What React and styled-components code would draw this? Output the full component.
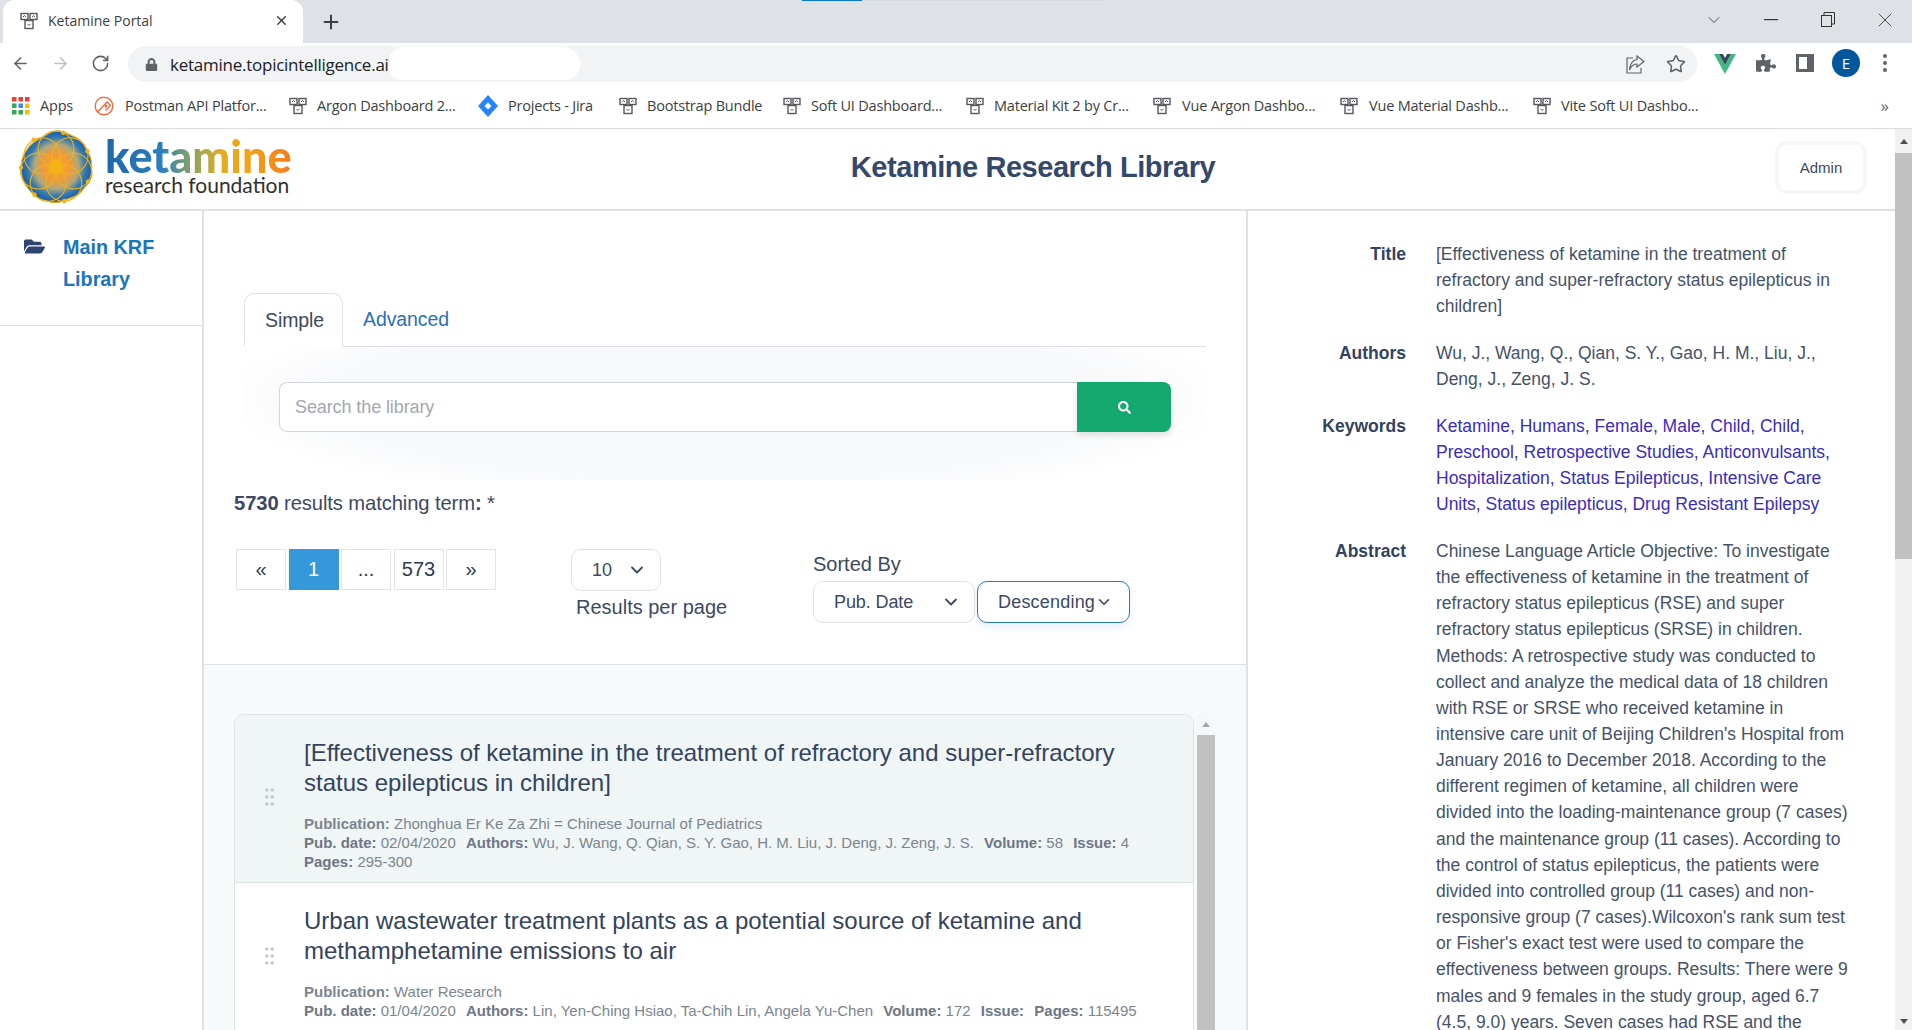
import React from 'react'
import styled, { createGlobalStyle } from 'styled-components'
import { ArrowLeft, ArrowRight, RotateCw, Star, ChevronDown, Plus, X } from 'lucide-react'
import { FaFolderOpen, FaPuzzlePiece, FaLock, FaSearch } from 'react-icons/fa'

const GlobalStyle = createGlobalStyle`
  html, body { margin: 0; padding: 0; height: 100%; overflow: hidden; background: #fff; }
  #root { height: 100%; }
  * { box-sizing: border-box; }
`

const Window = styled.div`
  height: 1030px;
  display: flex;
  flex-direction: column;
  font-family: "Liberation Sans", Arial, sans-serif;
  color: #3b4963;
`

const TabStrip = styled.div`
  position: relative;
  height: 43px;
  flex: none;
  background: #dee1e6;
  display: flex;
  align-items: flex-end;
  padding-left: 3px;
`
const LoadBar = styled.div`
  position: absolute;
  top: 0;
  left: 802px;
  width: 301px;
  height: 1px;
  background: linear-gradient(90deg, #0a78d6 0 60px, #d3d6da 60px);
`
const BrowserTab = styled.div`
  width: 300px;
  height: 43px;
  background: #fff;
  border-radius: 12px 12px 0 0;
  display: flex;
  align-items: center;
  padding: 0 14px 2px 17px;
  gap: 10px;
  font: 14px "Open Sans", sans-serif;
  color: #3c4043;
`
const TabTitle = styled.span`
  flex: 1;
`
const NewTab = styled.div`
  margin-left: 17px;
  height: 43px;
  display: flex;
  align-items: center;
  color: #3c4043;
`
const WindowControls = styled.div`
  margin-left: auto;
  height: 43px;
  display: flex;
  align-items: center;
  padding-bottom: 4px;
  margin-right: -1px;
  color: #3a3a3a;
`
const WinSlot = styled.div`
  width: 57px;
  display: flex;
  justify-content: center;
`

const Toolbar = styled.div`
  height: 43px;
  flex: none;
  display: flex;
  align-items: center;
  padding: 0 0 3px 11px;
  color: #5f6368;
`
const NavIcons = styled.div`
  display: flex;
  gap: 21px;
  width: 117px;
`
const Omnibox = styled.div`
  position: relative;
  width: 1569px;
  height: 36px;
  margin-top: 2px;
  background: #f1f3f4;
  border-radius: 18px;
  display: flex;
  align-items: center;
  padding: 0 11px 0 17px;
`
const Url = styled.span`
  margin-left: 12px;
  font: 17px "Open Sans", sans-serif;
  color: #202124;
  letter-spacing: -0.25px;
`
const Redaction = styled.div`
  position: absolute;
  left: 261px;
  top: 1px;
  width: 191px;
  height: 33px;
  background: #fff;
  border-radius: 16px 20px 18px 14px;
`
const OmniRight = styled.div`
  margin-left: auto;
  display: flex;
  align-items: center;
  gap: 20px;
`
const Extensions = styled.div`
  display: flex;
  align-items: center;
  gap: 20px;
  margin-left: 17px;
`
const Avatar = styled.div`
  width: 28px;
  height: 28px;
  margin: 0 2px 0 -2px;
  border-radius: 50%;
  background: #01579b;
  color: #fff;
  font: 15px "Open Sans", sans-serif;
  display: flex;
  align-items: center;
  justify-content: center;
`

const Bookmarks = styled.div`
  height: 43px;
  flex: none;
  display: flex;
  align-items: center;
  padding: 0 23px 3px 12px;
  border-bottom: 1px solid #dadce0;
  font: 14.5px "Open Sans", sans-serif;
  color: #3c4043;
  white-space: nowrap;
`
const Bookmark = styled.div`
  display: flex;
  align-items: center;
  gap: ${p => p.$gap || 10}px;
  width: ${p => p.$w}px;
  flex: none;
`
const BookmarkLabel = styled.span`
  letter-spacing: -0.2px;
`
const MoreMarks = styled.span`
  margin-left: auto;
  font-size: 17px;
  color: #5f6368;
`

const Header = styled.header`
  height: 82px;
  flex: none;
  border-bottom: 2px solid #dee2e6;
  display: flex;
  align-items: center;
  padding: 0 28px 4px 19px;
`
const Logo = styled.div`
  display: flex;
  align-items: center;
  gap: 12px;
  width: 290px;
`
const Wordmark = styled.div`
  display: flex;
  flex-direction: column;
  margin-top: -2px;
  font-family: Lato, sans-serif;
`
const WordTop = styled.span`
  font-size: 45px;
  font-weight: 900;
  line-height: 38px;
  background: linear-gradient(90deg, #1f66ad 0%, #2b7fbe 30%, #7fa26a 45%, #e3ad1f 62%, #f2a315 78%, #f47b20 100%);
  -webkit-background-clip: text;
  background-clip: text;
  color: transparent;
`
const WordBottom = styled.span`
  font-size: 21px;
  line-height: 20px;
  color: #2f2f2f;
`
const PageTitle = styled.h1`
  flex: 1;
  margin: 0;
  padding-right: 18px;
  text-align: center;
  font-size: 29px;
  font-weight: 700;
  letter-spacing: -0.45px;
  color: #33486b;
`
const AdminButton = styled.button`
  width: 92px;
  height: 53px;
  border: 4px solid #f6f7f9;
  border-radius: 12px;
  background: #fff;
  font: 15px "Liberation Sans", sans-serif;
  color: #3b4963;
`

const Body = styled.div`
  flex: 1;
  min-height: 0;
  display: flex;
`
const MainColumn = styled.div`
  flex: 1;
  min-width: 0;
  display: flex;
  flex-direction: column;
`
const Panels = styled.div`
  flex: 1;
  min-height: 0;
  display: flex;
  overflow: hidden;
`
const Sidebar = styled.aside`
  width: 204px;
  flex: none;
  border-right: 2px solid #dee2e6;
`
const SideItem = styled.div`
  height: 115px;
  border-bottom: 1px solid #dee2e6;
  display: flex;
  padding: 20px 20px 0 24px;
  gap: 18px;
  color: #2f4570;
  svg { margin-top: 5px; flex: none; }
`
const SideLink = styled.a`
  font-size: 19.8px;
  font-weight: 700;
  line-height: 32px;
  color: #1a75bc;
`

const Center = styled.main`
  width: 1044px;
  flex: none;
  border-right: 2px solid #dee2e6;
  display: flex;
  flex-direction: column;
`
const SearchArea = styled.section`
  height: 454px;
  flex: none;
  border-bottom: 1.5px solid #dee2e6;
  padding: 83px 40px 0 30px;
`
const Tabs = styled.div`
  position: relative;
  z-index: 1;
  margin-left: 10px;
  display: flex;
  align-items: flex-end;
  border-bottom: 1px solid #dee2e6;
  height: 53px;
  margin-bottom: -1px;
`
const TabLink = styled.div`
  height: 54px;
  padding: 0 20px;
  display: flex;
  align-items: center;
  font-size: 19.5px;
  letter-spacing: -0.1px;
  color: ${p => (p.$active ? '#3b4963' : '#2a6fb9')};
  ${p => p.$active && `
    width: 99px;
    border: 1px solid #dee2e6;
    border-bottom-color: #fff;
    border-radius: 10px 10px 0 0;
    background: #fff;
    margin-bottom: -1px;
  `}
`
const SearchCard = styled.div`
  margin-left: 10px;
  height: 134px;
  padding: 36px 35px 0 35px;
  background: radial-gradient(ellipse 53% 78% at 50% 40%, #f8f9fb 78%, #ffffff 100%);
`
const SearchGroup = styled.div`
  display: flex;
  height: 50px;
`
const SearchInput = styled.input`
  flex: 1;
  min-width: 0;
  border: 1px solid #d3d7dc;
  border-right: 0;
  border-radius: 8px 0 0 8px;
  padding: 0 15px;
  font: 18px "Liberation Sans", sans-serif;
  letter-spacing: -0.1px;
  &::placeholder { color: #a2a8b0; opacity: 1; }
`
const SearchButton = styled.button`
  width: 94px;
  border: 0;
  border-radius: 0 8px 8px 0;
  background: #13a86d;
  color: #fff;
  box-shadow: 0 3px 6px rgba(0, 0, 0, 0.12);
  display: flex;
  align-items: center;
  justify-content: center;
`
const ResultLine = styled.div`
  margin: 10px 0 33px 0;
  height: 26px;
  line-height: 26px;
  font-size: 20.2px;
  letter-spacing: -0.1px;
`
const Controls = styled.div`
  display: flex;
  align-items: flex-start;
`
const Pager = styled.div`
  width: 337px;
  flex: none;
  display: flex;
  gap: 2.5px;
  padding-left: 2px;
`
const PageBtn = styled.div`
  width: 50px;
  height: 41px;
  border: 1px solid #e2e4e8;
  display: flex;
  align-items: center;
  justify-content: center;
  font-size: 20px;
  color: ${p => (p.$active ? '#fff' : '#2d3a52')};
  background: ${p => (p.$active ? '#3498db' : '#fff')};
  border-color: ${p => (p.$active ? '#3498db' : '#e2e4e8')};
`
const PerPage = styled.div`
  width: 242px;
  flex: none;
`
const SelectBox = styled.div`
  width: ${p => p.$w}px;
  height: 42px;
  border: 1px solid ${p => (p.$focus ? '#2a78bd' : '#dee2e6')};
  border-radius: 10px;
  background: #fff;
  display: flex;
  align-items: center;
  justify-content: space-between;
  padding: ${p => p.$pad || '0 13px 0 20px'};
  font-size: 18px;
  letter-spacing: ${p => (p.$focus ? '0.2px' : '-0.1px')};
  flex: none;
  ${p => p.$focus && 'box-shadow: 0 4px 10px rgba(42, 120, 189, 0.12);'}
`
const PerPageLabel = styled.div`
  margin: 1px 0 0 5px;
  font-size: 20px;
  line-height: 30px;
`
const SortBlock = styled.div`
  margin-top: 2px;
`
const SortLabel = styled.div`
  font-size: 20px;
  line-height: 26px;
  height: 30px;
`
const SortRow = styled.div`
  display: flex;
  gap: 2px;
`

const ListArea = styled.section`
  flex: 1;
  min-height: 0;
  overflow: hidden;
  background: #f8f9fb;
  padding: 49px 0 0 30px;
  display: flex;
  gap: 3px;
`
const List = styled.div`
  width: 960px;
  flex: none;
  background: #fff;
  border: 1px solid #dde3e3;
  border-bottom: 0;
  border-radius: 10px 10px 0 0;
`
const Item = styled.article`
  display: flex;
  align-items: center;
  padding: 23px 30px 11px 30px;
  background: ${p => (p.$active ? '#f0f5f5' : '#fff')};
  border-bottom: 1px solid #dde3e3;
  border-radius: ${p => (p.$active ? '10px 10px 0 0' : '0')};
`
const Grip = styled.svg`
  flex: none;
  margin: -15px 30px 0 0;
`
const ItemTitle = styled.h3`
  margin: 0 0 16px;
  font-size: 24px;
  font-weight: 400;
  line-height: 30px;
  color: #33435f;
`
const Meta = styled.div`
  font-size: 15px;
  line-height: 19px;
  color: #7b8591;
`
const MetaPart = styled.span`
  display: inline-block;
  white-space: nowrap;
  margin-right: 6px;
  b { color: #6d7785; }
`
const InnerScroll = styled.div`
  width: 18px;
  flex: none;
  background: #f6f7f8;
  display: flex;
  flex-direction: column;
`
const ScrollArrow = styled.div`
  height: ${p => p.$h}px;
  flex: none;
  display: flex;
  align-items: center;
  justify-content: center;
`
const Triangle = styled.div`
  width: 0;
  height: 0;
  border-left: 4px solid transparent;
  border-right: 4px solid transparent;
  ${p => (p.$down ? 'border-top' : 'border-bottom')}: 5px solid ${p => p.$color || '#505050'};
`
const Thumb = styled.div`
  flex: ${p => (p.$h ? 'none' : 1)};
  height: ${p => (p.$h ? `${p.$h}px` : 'auto')};
  background: #c1c1c1;
`

const Details = styled.aside`
  flex: 1;
  min-width: 0;
  padding: 30px 0 0 0;
  display: flex;
  flex-direction: column;
  gap: 20.5px;
  font-size: 17.5px;
  line-height: 26.15px;
`
const DetailRow = styled.div`
  display: grid;
  grid-template-columns: 158px 416px;
  column-gap: 30px;
`
const DetailLabel = styled.div`
  text-align: right;
  font-weight: 700;
  color: #33435f;
`
const DetailValue = styled.div`
  color: ${p => (p.$link ? '#3a2cc0' : '#45526a')};
`

const PageScroll = styled.div`
  width: 17px;
  flex: none;
  background: #f1f1f1;
  display: flex;
  flex-direction: column;
`
const ScrollGap = styled.div`
  flex: 1;
`

const Favicon = () => (
  <svg width="18" height="18" viewBox="0 0 18 18" fill="none" stroke="#55585c" strokeWidth="1.4">
    <rect x="1" y="1.5" width="7" height="6" />
    <rect x="10" y="1.5" width="7" height="6" />
    <rect x="5" y="8.5" width="8" height="8" />
    <path d="M3 5l1.5-1.5L6 5M12 5l1.5-1.5L15 5M7.5 12l1.5 1.5 1.5-1.5" strokeWidth="1" />
  </svg>
)

const AppsIcon = () => {
  const colors = ['#ea4335', '#ea4335', '#ea4335', '#34a853', '#4285f4', '#fbbc04', '#34a853', '#34a853', '#fbbc04']
  return (
    <svg width="18" height="18" viewBox="0 0 18 18">
      {colors.map((c, i) => (
        <rect key={i} x={(i % 3) * 6.5} y={Math.floor(i / 3) * 6.5} width="4.5" height="4.5" fill={c} />
      ))}
    </svg>
  )
}

const PostmanIcon = () => (
  <svg width="20" height="20" viewBox="0 0 20 20" fill="none" stroke="#f26b3a" strokeWidth="1.4">
    <circle cx="10" cy="10" r="8.8" />
    <path d="M3.5 16L13 6l3.5 3.5-5 5" />
    <circle cx="12" cy="10" r="0.8" />
  </svg>
)

const JiraIcon = () => (
  <svg width="20" height="22" viewBox="0 0 20 22">
    <path d="M10 0l10 11-10 11L0 11z" fill="#2684ff" />
    <path d="M10 7.5l3.5 3.5-3.5 3.5L6.5 11z" fill="#fff" />
  </svg>
)

const VueIcon = () => (
  <svg width="22" height="22" viewBox="0 0 22 22">
    <path d="M0 2h5l6 11 6-11h5L11 22z" fill="#41b883" />
    <path d="M5 2h4l2 4 2-4h4l-6 11z" fill="#34495e" />
  </svg>
)

const ShareIcon = () => (
  <svg width="21" height="21" viewBox="0 0 21 21" fill="none" stroke="#5f6368" strokeWidth="1.2">
    <path d="M8 4H2v15h14v-5" />
    <path d="M12 2l7 5.5-7 5.5V10C8 10 6 12 4.5 16 5 10 8 6 12 5.5z" />
  </svg>
)

const SidePanelIcon = () => (
  <svg width="18" height="18" viewBox="0 0 18 18">
    <path d="M0 0h18v18H0zM3 3v12h8V3z" fill="#5f6368" fillRule="evenodd" />
  </svg>
)

const DotsIcon = () => (
  <svg width="6" height="20" viewBox="0 0 6 20" fill="#5f6368">
    <circle cx="3" cy="3" r="2" />
    <circle cx="3" cy="10" r="2" />
    <circle cx="3" cy="17" r="2" />
  </svg>
)

const RestoreIcon = () => (
  <svg width="14" height="15" viewBox="0 0 14 15" fill="none" stroke="#333" strokeWidth="1">
    <rect x="0.5" y="3.5" width="10" height="11" />
    <path d="M3 3V0.5h10.5V12H11" />
  </svg>
)

const GripIcon = () => (
  <Grip width="9" height="18" viewBox="0 0 9 18" fill="#c3c9cf">
    {[2, 9, 16].flatMap(y => [1.8, 7.2].map(x => <circle key={`${x}-${y}`} cx={x} cy={y} r="1.8" />))}
  </Grip>
)

const LogoMark = () => {
  const petals = [0, 51.4, 102.8, 154.3, 205.7, 257.1, 308.6]
  return (
    <svg width="74" height="74" viewBox="0 0 74 74">
      <defs>
        <radialGradient id="krf" cx="50%" cy="50%" r="50%">
          <stop offset="0%" stopColor="#f5a623" />
          <stop offset="38%" stopColor="#f19a3c" />
          <stop offset="62%" stopColor="#b0a878" />
          <stop offset="82%" stopColor="#2f78b6" />
          <stop offset="100%" stopColor="#1b5fa5" />
        </radialGradient>
      </defs>
      <path
        d="M37 1C45 0 50 5 56 7 64 10 66 17 70 24 74 31 72 37 73 44 73 52 66 56 62 62 57 68 50 68 44 71 37 74 31 72 24 70 17 68 12 63 8 57 3 51 2 45 2 38 2 30 4 24 9 18 14 11 20 9 27 5 30 3 33 1 37 1z"
        fill="url(#krf)"
        stroke="#f2b01e"
        strokeWidth="1.2"
      />
      <g fill="none" stroke="#f3b21a" strokeWidth="1.1">
        {petals.map(a => (
          <circle key={a} cx="37" cy="19" r="18" transform={`rotate(${a} 37 37)`} />
        ))}
      </g>
      <circle cx="37" cy="37" r="7.5" fill="#f4b416" />
      <g fill="#f3b21a">
        {petals.map(a => (
          <circle key={a} cx="37" cy="2" r="2.2" transform={`rotate(${a + 12} 37 37)`} />
        ))}
      </g>
    </svg>
  )
}

const marks = [
  { w: 82, gap: 10, icon: <AppsIcon />, label: 'Apps' },
  { w: 195, gap: 11, icon: <PostmanIcon />, label: 'Postman API Platfor...' },
  { w: 189, gap: 10, icon: <Favicon />, label: 'Argon Dashboard 2...' },
  { w: 141, gap: 10, icon: <JiraIcon />, label: 'Projects - Jira' },
  { w: 164, gap: 10, icon: <Favicon />, label: 'Bootstrap Bundle' },
  { w: 183, gap: 10, icon: <Favicon />, label: 'Soft UI Dashboard...' },
  { w: 187, gap: 10, icon: <Favicon />, label: 'Material Kit 2 by Cr...' },
  { w: 187, gap: 11, icon: <Favicon />, label: 'Vue Argon Dashbo...' },
  { w: 193, gap: 11, icon: <Favicon />, label: 'Vue Material Dashb...' },
  { w: 180, gap: 10, icon: <Favicon />, label: 'Vite Soft UI Dashbo...' },
]

const results = [
  {
    title: '[Effectiveness of ketamine in the treatment of refractory and super-refractory status epilepticus in children]',
    publication: 'Zhonghua Er Ke Za Zhi = Chinese Journal of Pediatrics',
    date: '02/04/2020',
    authors: 'Wu, J. Wang, Q. Qian, S. Y. Gao, H. M. Liu, J. Deng, J. Zeng, J. S.',
    volume: '58',
    issue: '4',
    pages: '295-300',
  },
  {
    title: 'Urban wastewater treatment plants as a potential source of ketamine and methamphetamine emissions to air',
    publication: 'Water Research',
    date: '01/04/2020',
    authors: 'Lin, Yen-Ching Hsiao, Ta-Chih Lin, Angela Yu-Chen',
    volume: '172',
    issue: '',
    pages: '115495',
  },
]

const abstract = "Chinese Language Article Objective: To investigate the effectiveness of ketamine in the treatment of refractory status epilepticus (RSE) and super refractory status epilepticus (SRSE) in children. Methods: A retrospective study was conducted to collect and analyze the medical data of 18 children with RSE or SRSE who received ketamine in intensive care unit of Beijing Children's Hospital from January 2016 to December 2018. According to the different regimen of ketamine, all children were divided into the loading-maintenance group (7 cases) and the maintenance group (11 cases). According to the control of status epilepticus, the patients were divided into controlled group (11 cases) and non-responsive group (7 cases).Wilcoxon's rank sum test or Fisher's exact test were used to compare the effectiveness between groups. Results: There were 9 males and 9 females in the study group, aged 6.7 (4.5, 9.0) years. Seven cases had RSE and the"

const ResultItem = ({ item, active }) => (
  <Item $active={active}>
    <GripIcon />
    <div>
      <ItemTitle>{item.title}</ItemTitle>
      <Meta>
        <div>
          <b>Publication:</b> {item.publication}
        </div>
        <MetaPart><b>Pub. date:</b> {item.date}</MetaPart>{' '}
        <MetaPart><b>Authors:</b> {item.authors}</MetaPart>{' '}
        <MetaPart><b>Volume:</b> {item.volume}</MetaPart>{' '}
        <MetaPart><b>Issue:</b> {item.issue}</MetaPart>{' '}
        <MetaPart><b>Pages:</b> {item.pages}</MetaPart>
      </Meta>
    </div>
  </Item>
)

const App = () => {
  return (
    <Window>
      <GlobalStyle />
      <TabStrip>
        <LoadBar />
        <BrowserTab>
          <Favicon />
          <TabTitle>Ketamine Portal</TabTitle>
          <X size={15} strokeWidth={2.4} />
        </BrowserTab>
        <NewTab><Plus size={22} strokeWidth={2.2} /></NewTab>
        <WindowControls>
          <WinSlot><ChevronDown size={20} strokeWidth={1} /></WinSlot>
          <WinSlot><svg width="14" height="2"><rect width="14" height="1.2" fill="#333" /></svg></WinSlot>
          <WinSlot><RestoreIcon /></WinSlot>
          <WinSlot><X size={24} strokeWidth={0.9} /></WinSlot>
        </WindowControls>
      </TabStrip>

      <Toolbar>
        <NavIcons>
          <ArrowLeft size={19} />
          <ArrowRight size={19} color="#bcbfc3" />
          <RotateCw size={19} />
        </NavIcons>
        <Omnibox>
          <FaLock size={13} />
          <Url>ketamine.topicintelligence.ai</Url>
          <Redaction />
          <OmniRight>
            <ShareIcon />
            <Star size={20} strokeWidth={1.8} />
          </OmniRight>
        </Omnibox>
        <Extensions>
          <VueIcon />
          <FaPuzzlePiece size={20} />
          <SidePanelIcon />
          <Avatar>E</Avatar>
          <DotsIcon />
        </Extensions>
      </Toolbar>

      <Bookmarks>
        {marks.map(m => (
          <Bookmark key={m.label} $w={m.w} $gap={m.gap}>
            {m.icon}
            <BookmarkLabel>{m.label}</BookmarkLabel>
          </Bookmark>
        ))}
        <MoreMarks>»</MoreMarks>
      </Bookmarks>

      <Body>
        <MainColumn>
          <Header>
            <Logo>
              <LogoMark />
              <Wordmark>
                <WordTop>ketamine</WordTop>
                <WordBottom>research foundation</WordBottom>
              </Wordmark>
            </Logo>
            <PageTitle>Ketamine Research Library</PageTitle>
            <AdminButton>Admin</AdminButton>
          </Header>
          <Panels>
            <Sidebar>
              <SideItem>
                <FaFolderOpen size={21} />
                <SideLink>Main KRF Library</SideLink>
              </SideItem>
            </Sidebar>

            <Center>
              <SearchArea>
                <Tabs>
                  <TabLink $active>Simple</TabLink>
                  <TabLink>Advanced</TabLink>
                </Tabs>
                <SearchCard>
                  <SearchGroup>
                    <SearchInput placeholder="Search the library" />
                    <SearchButton><FaSearch size={13} /></SearchButton>
                  </SearchGroup>
                </SearchCard>
                <ResultLine><b>5730</b> results matching term<b>:</b> *</ResultLine>
                <Controls>
                  <Pager>
                    <PageBtn>«</PageBtn>
                    <PageBtn $active>1</PageBtn>
                    <PageBtn>...</PageBtn>
                    <PageBtn>573</PageBtn>
                    <PageBtn>»</PageBtn>
                  </Pager>
                  <PerPage>
                    <SelectBox $w={90}>10 <ChevronDown size={20} strokeWidth={2.2} /></SelectBox>
                    <PerPageLabel>Results per page</PerPageLabel>
                  </PerPage>
                  <SortBlock>
                    <SortLabel>Sorted By</SortLabel>
                    <SortRow>
                      <SelectBox $w={162}>Pub. Date <ChevronDown size={20} strokeWidth={2.2} /></SelectBox>
                      <SelectBox $w={153} $focus $pad="0 16px 0 20px">Descending <ChevronDown size={20} strokeWidth={2.2} /></SelectBox>
                    </SortRow>
                  </SortBlock>
                </Controls>
              </SearchArea>

              <ListArea>
                <List>
                  {results.map((r, i) => (
                    <ResultItem key={r.title} item={r} active={i === 0} />
                  ))}
                </List>
                <InnerScroll>
                  <ScrollArrow $h={21}><Triangle $color="#a5a5a5" /></ScrollArrow>
                  <Thumb />
                </InnerScroll>
              </ListArea>
            </Center>

            <Details>
              <DetailRow>
                <DetailLabel>Title</DetailLabel>
                <DetailValue>[Effectiveness of ketamine in the treatment of refractory and super-refractory status epilepticus in children]</DetailValue>
              </DetailRow>
              <DetailRow>
                <DetailLabel>Authors</DetailLabel>
                <DetailValue>Wu, J., Wang, Q., Qian, S. Y., Gao, H. M., Liu, J., Deng, J., Zeng, J. S.</DetailValue>
              </DetailRow>
              <DetailRow>
                <DetailLabel>Keywords</DetailLabel>
                <DetailValue $link>Ketamine, Humans, Female, Male, Child, Child, Preschool, Retrospective Studies, Anticonvulsants, Hospitalization, Status Epilepticus, Intensive Care Units, Status epilepticus, Drug Resistant Epilepsy</DetailValue>
              </DetailRow>
              <DetailRow>
                <DetailLabel>Abstract</DetailLabel>
                <DetailValue>{abstract}</DetailValue>
              </DetailRow>
            </Details>
          </Panels>
        </MainColumn>
        <PageScroll>
          <ScrollArrow $h={24}><Triangle /></ScrollArrow>
          <Thumb $h={406} />
          <ScrollGap />
          <ScrollArrow $h={17}><Triangle $down /></ScrollArrow>
        </PageScroll>
      </Body>
    </Window>
  )
}

export default App
